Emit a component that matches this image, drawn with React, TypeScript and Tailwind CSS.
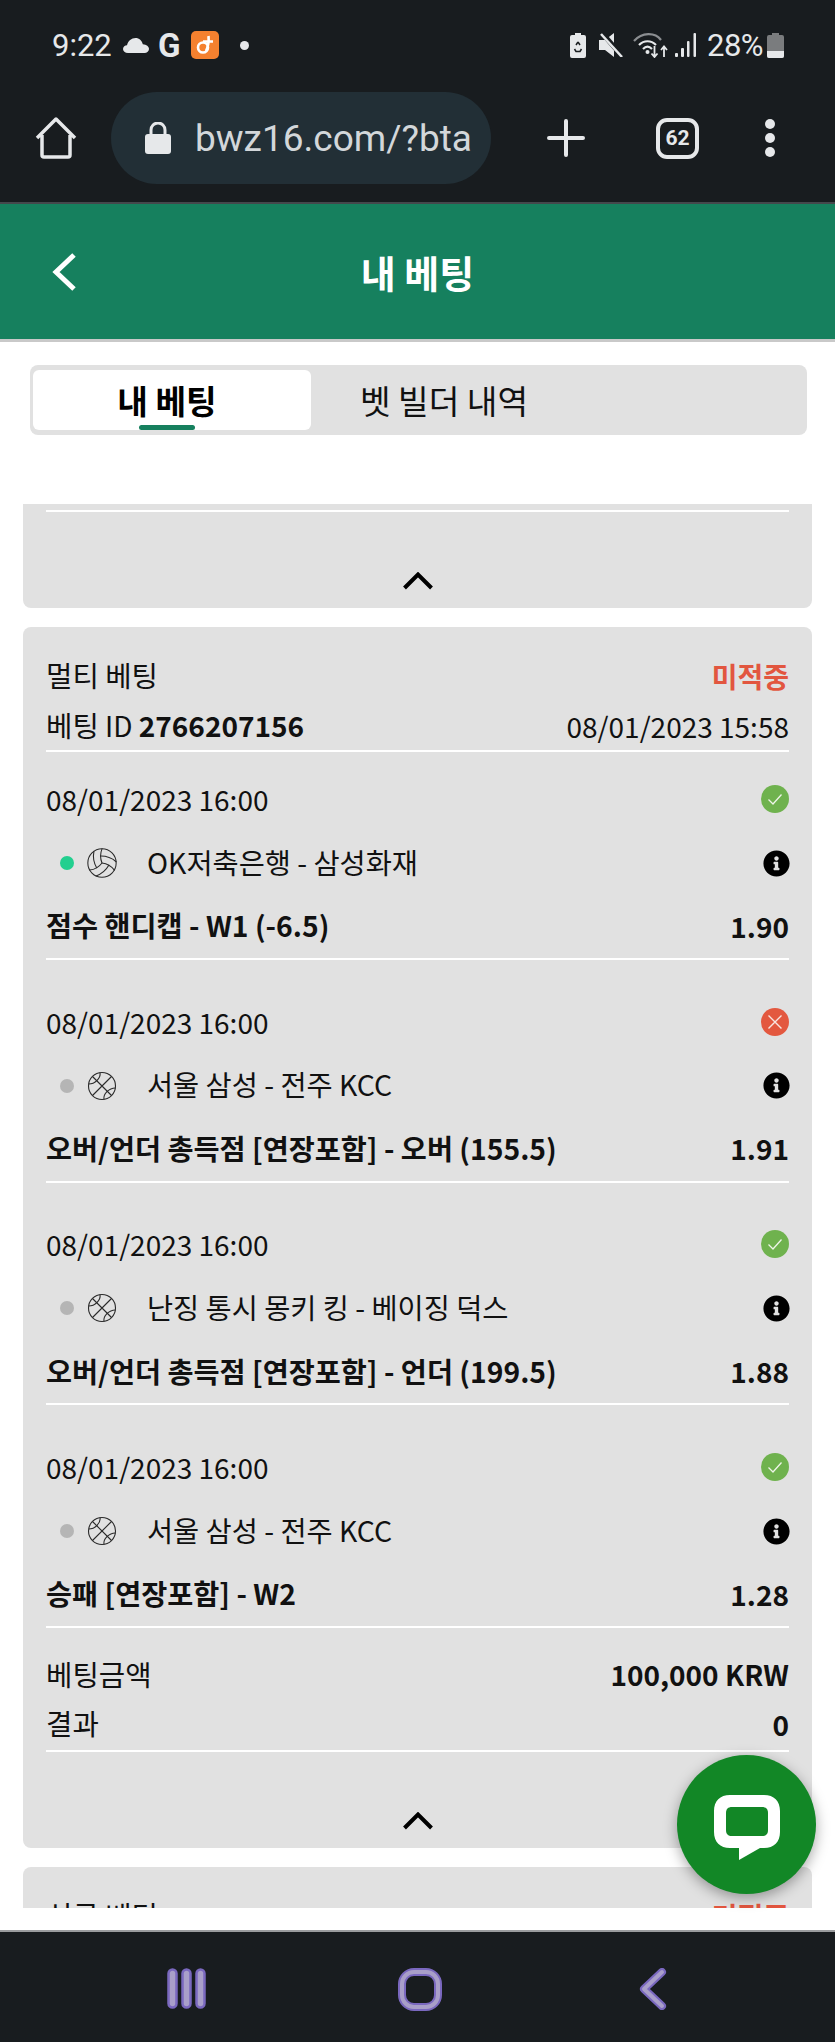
import React from "react";
import { FaInfoCircle } from "react-icons/fa";
import { Volleyball as VolleyIcon } from "lucide-react";

function Check({ ok }: { ok: boolean }) {
  return (
    <svg width="28" height="28" viewBox="0 0 28 28">
      <circle cx="14" cy="14" r="14" fill={ok ? "#6fb24e" : "#e3583f"} />
      {ok ? (
        <path d="M7.5 14.5l4.5 4.5 8.5-9.5" fill="none" stroke="#eef5e8" strokeWidth="1.3" />
      ) : (
        <path d="M7.5 7.5l13 13M20.5 7.5l-13 13" fill="none" stroke="#f8e5e0" strokeWidth="1.4" />
      )}
    </svg>
  );
}

function Basketball() {
  return (
    <svg width="30" height="30" viewBox="0 0 30 30" fill="none" stroke="#2a2a2a" strokeWidth="1.1">
      <circle cx="15" cy="15" r="13.5" />
      <path d="M5.5 5.5l19 19M24.5 5.5l-19 19" />
      <path d="M13 1.6C14 7 8 13 1.6 13" />
      <path d="M17 28.4C16 23 22 17 28.4 17" />
    </svg>
  );
}

function Volleyball() {
  return <VolleyIcon className="-m-[2px] text-[#2a2a2a]" size={34} strokeWidth={0.75} />;
}

function Chevron() {
  return (
    <svg width="30" height="18" viewBox="0 0 30 18" fill="none" stroke="#000" strokeWidth="4">
      <path d="M1.5 16L15 2.5 28.5 16" />
    </svg>
  );
}

const blocks = [
  { ok: true, live: true, ball: "v", teams: "OK저축은행 - 삼성화재", market: "점수 핸디캡 - W1 (-6.5)", odd: "1.90" },
  { ok: false, live: false, ball: "b", teams: "서울 삼성 - 전주 KCC", market: "오버/언더 총득점 [연장포함] - 오버 (155.5)", odd: "1.91" },
  { ok: true, live: false, ball: "b", teams: "난징 통시 몽키 킹 - 베이징 덕스", market: "오버/언더 총득점 [연장포함] - 언더 (199.5)", odd: "1.88" },
  { ok: true, live: false, ball: "b", teams: "서울 삼성 - 전주 KCC", market: "승패 [연장포함] - W2", odd: "1.28" },
];

function Divider() {
  return <div className="h-[2px] bg-white" />;
}

function Block({ b }: { b: (typeof blocks)[number] }) {
  return (
    <div className="pt-[24px]">
      <div className="flex h-[50px] items-center justify-between">
        <span className="pb-[4px]">08/01/2023 16:00</span>
        <div className="-mt-[4px]">
          <Check ok={b.ok} />
        </div>
      </div>
      <div className="flex h-[74px] items-center justify-between">
        <div className="flex items-center">
          <span className={"ml-[14px] h-[14px] w-[14px] rounded-full " + (b.live ? "bg-[#22cf8f]" : "bg-[#b5b5b5]")} />
          <span className="ml-[13px] flex h-[30px] w-[30px] items-center justify-center">
            {b.ball === "v" ? <Volleyball /> : <Basketball />}
          </span>
          <span className="ml-[30px] pb-[2px] text-[28.4px]">{b.teams}</span>
        </div>
        <FaInfoCircle className="-mr-[1px] h-[27px] w-[27px] text-black" />
      </div>
      <div className="flex h-[56px] items-center justify-between pb-[5px] font-bold">
        <span className="text-[28.3px]">{b.market}</span>
        <span>{b.odd}</span>
      </div>
      <div className="mt-[2px]">
        <Divider />
      </div>
    </div>
  );
}

export default function App() {
  return (
    <div
      className="relative flex h-[2042px] w-[835px] flex-col overflow-hidden bg-white text-[28px] leading-none text-[#111]"
      style={{ fontFamily: '"Noto Sans CJK KR", "Noto Sans", sans-serif' }}
    >
      {/* Status bar + browser bar */}
      <div className="h-[202px] shrink-0 bg-[#181c1f] text-[#e6e8ea]" style={{ fontFamily: "Roboto, sans-serif" }}>
        <div className="flex h-[92px] items-center pb-[2px] pl-[52px] pr-[51px]">
          <span className="w-[60px] text-[31px]">9:22</span>
          <svg className="ml-[11px]" width="26" height="15" viewBox="0 0 26 15" fill="#e6e8ea">
            <path d="M5 15C2 15 0 13.2 0 11c0-2.3 2-3.8 4-3.8C5 3 8.5 0 12.5 0c3.7 0 6.5 2.5 7.3 6.3C23.5 6.5 26 8.5 26 11c0 2.3-2 4-4.5 4z" />
          </svg>
          <span className="ml-[9px] w-[25px] text-[33px] font-bold">G</span>
          <span className="ml-[8px] flex h-[28px] w-[28px] items-center justify-center rounded-[5px] bg-[#f5812f]">
            <svg width="20" height="20" viewBox="0 0 20 20" fill="none" stroke="#fff" strokeWidth="2.6">
              <circle cx="8" cy="12.5" r="5" />
              <path d="M11 16C14 10 14 6 13.5 1M8 6.5h10" />
            </svg>
          </span>
          <span className="ml-[21px] h-[9px] w-[9px] rounded-full bg-[#e6e8ea]" />
          <div className="flex-1" />
          <svg width="16" height="25" viewBox="0 0 16 25">
            <path d="M5 0h6v2h3a2 2 0 012 2v19a2 2 0 01-2 2H2a2 2 0 01-2-2V4a2 2 0 012-2h3z" fill="#e6e8ea" />
            <path d="M8 9l-2 3M8 9l2 3M4.5 16l1.5 2.5h4l1.5-2.5" fill="none" stroke="#181c1f" strokeWidth="1.5" />
          </svg>
          <svg className="ml-[13px]" width="24" height="24" viewBox="0 0 24 24">
            <path d="M0 7h6l9-7v24l-9-7H0z" fill="#e6e8ea" />
            <path d="M4 1l19 22" stroke="#181c1f" strokeWidth="5" />
            <path d="M2 1l21 23" stroke="#e6e8ea" strokeWidth="2.5" />
          </svg>
          <svg className="ml-[10px]" width="35" height="26" viewBox="0 0 35 26" fill="none">
            <path d="M1 9C9 0 22 0 28 8" stroke="#8b8e91" strokeWidth="2.2" />
            <path d="M6 13c5-5 12-5 17 0" stroke="#e6e8ea" strokeWidth="2.2" />
            <path d="M10 17c3-3 6-3 9 0" stroke="#e6e8ea" strokeWidth="2.2" />
            <circle cx="14.5" cy="20" r="2" fill="#e6e8ea" />
            <path d="M21.5 14v11M18.5 21.5l3 3.5 3-3.5M31 25V15M28 18l3-3.5 3 3.5" stroke="#e6e8ea" strokeWidth="1.8" />
          </svg>
          <svg className="ml-[7px]" width="22" height="24" viewBox="0 0 22 24" fill="#e6e8ea">
            <rect x="0" y="20" width="3" height="4" rx="1" />
            <rect x="6" y="15" width="3" height="9" rx="1" />
            <rect x="12" y="8" width="2.5" height="16" rx="1" />
            <rect x="18.5" y="0" width="2.5" height="24" rx="1" />
          </svg>
          <span className="ml-[10px] w-[59px] text-[31px] tracking-[-0.5px]">28%</span>
          <svg className="ml-[1px]" width="17" height="25" viewBox="0 0 17 25">
            <path d="M5 0h7v2h3a2 2 0 012 2v19a2 2 0 01-2 2H2a2 2 0 01-2-2V4a2 2 0 012-2h3z" fill="#7a7c7e" />
            <path d="M0 18h17v5a2 2 0 01-2 2H2a2 2 0 01-2-2z" fill="#e6e8ea" />
          </svg>
        </div>
        <div className="flex h-[92px] items-center pl-[35px]">
          <svg width="42" height="42" viewBox="0 0 42 42" fill="none" stroke="#e6e8ea" strokeWidth="3.5" strokeLinejoin="round">
            <path d="M2 21L21 2l19 19M7 18v20a2 2 0 002 2h24a2 2 0 002-2V18" />
          </svg>
          <div className="ml-[34px] flex h-[92px] w-[380px] items-center rounded-full bg-[#222f36] pl-[34px]">
            <svg width="26" height="32" viewBox="0 0 26 32">
              <path d="M6 13V8a7 7 0 0114 0v5" fill="none" stroke="#e6e8ea" strokeWidth="3" />
              <rect x="0" y="12" width="26" height="20" rx="3" fill="#e6e8ea" />
            </svg>
            <span className="ml-[24px] whitespace-nowrap text-[37px] text-[#d3d7da]">bwz16.com/?bta</span>
          </div>
          <svg className="ml-[56px]" width="38" height="38" viewBox="0 0 38 38" stroke="#e6e8ea" strokeWidth="4" strokeLinecap="round">
            <path d="M19 2v34M2 19h34" />
          </svg>
          <div className="ml-[71px] flex h-[41px] w-[43px] items-center justify-center rounded-[11px] border-[4px] border-[#e6e8ea] text-[21px] font-bold">
            62
          </div>
          <div className="ml-[66px] flex flex-col gap-[4px]">
            <span className="h-[10px] w-[10px] rounded-full bg-[#e6e8ea]" />
            <span className="h-[10px] w-[10px] rounded-full bg-[#e6e8ea]" />
            <span className="h-[10px] w-[10px] rounded-full bg-[#e6e8ea]" />
          </div>
        </div>
      </div>
      <div className="h-[2px] shrink-0 bg-[#44484c]" />

      {/* Green header */}
      <div className="relative flex h-[135px] shrink-0 items-center justify-center bg-[#16805e] text-[38px] font-bold text-white">
        <svg className="absolute left-[51px] top-[49px]" width="25" height="38" viewBox="0 0 25 38" fill="none" stroke="#fff" strokeWidth="5">
          <path d="M23 2L5 19l18 17" />
        </svg>
        <span>내 베팅</span>
      </div>
      <div className="h-[3px] shrink-0 bg-[#c9c9c9]" />

      {/* Tabs */}
      <div className="ml-[30px] mr-[28px] mt-[23px] flex h-[70px] shrink-0 rounded-[8px] bg-[#e1e1e1] pl-[3px] pt-[5px] text-[33.3px]">
        <div className="relative flex h-[60px] w-[278px] items-center justify-center rounded-[6px] bg-white pr-[10px] font-bold text-black">
          내 베팅
          <span className="absolute bottom-0 left-[106px] h-[5px] w-[56px] rounded-[3px] bg-[#16805e]" />
        </div>
        <div className="flex h-[60px] items-center pl-[49px]">벳 빌더 내역</div>
      </div>

      {/* Scroll area */}
      <div className="mt-[69px] flex h-[404px] flex-1 flex-col gap-[19px] overflow-hidden px-[23px]">
        <div className="h-[104px] shrink-0 rounded-b-[8px] bg-[#e1e1e1] px-[23px] pt-[6px]">
          <Divider />
          <div className="mt-[60px] flex justify-center">
            <Chevron />
          </div>
        </div>

        <div className="h-[1221px] shrink-0 rounded-[8px] bg-[#e1e1e1] px-[23px] pt-[23px]">
          <div className="flex h-[51px] items-center justify-between">
            <span className="text-[28.7px]">멀티 베팅</span>
            <span className="font-bold text-[#e2563f]">미적중</span>
          </div>
          <div className="flex h-[49px] items-center justify-between">
            <span>
              <span className="text-[28.7px]">베팅</span> ID <b>2766207156</b>
            </span>
            <span>08/01/2023 15:58</span>
          </div>
          <Divider />
          <div className="flex flex-col gap-[14.7px]">
            {blocks.map((b, i) => (
              <Block key={i} b={b} />
            ))}
          </div>
          <div className="mt-[21px] flex h-[50px] items-center justify-between">
            <span className="text-[28.7px]">베팅금액</span>
            <span className="font-bold">100,000 KRW</span>
          </div>
          <div className="flex h-[51px] items-center justify-between pb-[2px]">
            <span className="text-[28.7px]">결과</span>
            <span className="font-bold">0</span>
          </div>
          <Divider />
          <div className="mt-[60px] flex justify-center">
            <Chevron />
          </div>
        </div>

        <div className="h-[200px] shrink-0 rounded-[8px] bg-[#e1e1e1] px-[23px] pt-[23px]">
          <div className="flex h-[51px] items-center justify-between">
            <span className="text-[28.7px]">싱글 베팅</span>
            <span className="font-bold text-[#e2563f]">미적중</span>
          </div>
        </div>
      </div>

      <div className="h-[22px] shrink-0" />
      <div className="h-[2px] shrink-0 bg-[#9a9c9e]" />

      {/* Android nav */}
      <div className="flex h-[110px] shrink-0 items-start bg-[#181c1f] pt-[36px]">
        <svg className="ml-[167px]" width="39" height="41" viewBox="0 0 39 41" fill="#a99fc9" stroke="#7a68bf" strokeWidth="2.5">
          <rect x="1.5" y="1.5" width="8" height="38" rx="4" />
          <rect x="15.5" y="1.5" width="8" height="38" rx="4" />
          <rect x="29.5" y="1.5" width="8" height="38" rx="4" />
        </svg>
        <svg className="ml-[192px]" width="44" height="43" viewBox="0 0 44 43" fill="none">
          <rect x="4" y="4" width="36" height="35" rx="12" stroke="#7a68bf" strokeWidth="8" />
          <rect x="4" y="4" width="36" height="35" rx="12" stroke="#a99fc9" strokeWidth="4" />
        </svg>
        <svg className="ml-[197px]" width="28" height="42" viewBox="0 0 28 42" fill="none" strokeLinecap="round" strokeLinejoin="round">
          <path d="M23 4L5 21l18 17" stroke="#7a68bf" strokeWidth="8" />
          <path d="M23 4L5 21l18 17" stroke="#a99fc9" strokeWidth="4" />
        </svg>
      </div>

      {/* Floating chat button */}
      <div className="absolute left-[677px] top-[1755px] flex h-[139px] w-[139px] items-center justify-center rounded-full bg-[#128726] shadow-[0_4px_14px_rgba(0,0,0,0.35)]">
        <svg className="mt-[5px]" width="66" height="65" viewBox="0 0 66 65">
          <path
            fillRule="evenodd"
            fill="#fff"
            d="M16 0h34c10 0 16 6 16 16v21c0 10-6 16-16 16h-4L25 65V53h-9C6 53 0 47 0 37V16C0 6 6 0 16 0zM18 12c-4 0-6 2-6 6v17c0 4 2 6 6 6h30c4 0 6-2 6-6V18c0-4-2-6-6-6z"
          />
        </svg>
      </div>
    </div>
  );
}
